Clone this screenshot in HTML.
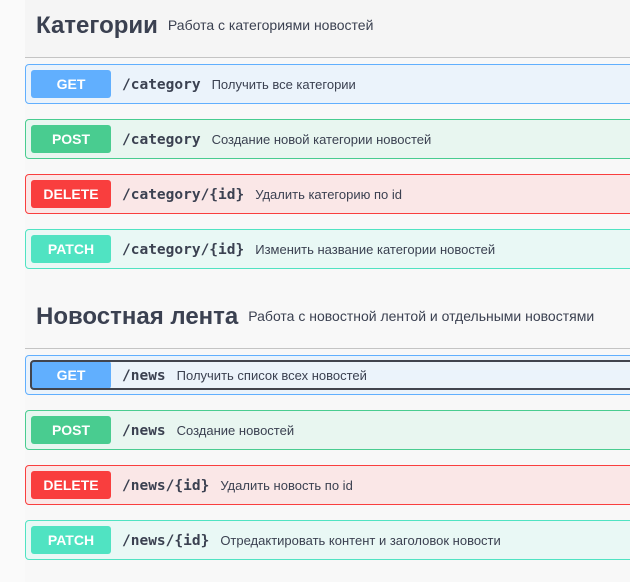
<!DOCTYPE html>
<html><head><meta charset="utf-8"><style>
*{margin:0;padding:0;box-sizing:border-box}
body{width:630px;height:582px;overflow:hidden;background:#fafafa;font-family:"Liberation Sans",sans-serif;color:#3b4151;position:relative}
.bg{position:absolute;left:25px;top:0;width:605px;height:582px;background:#f8f8f8}
.hdr{position:absolute;left:25px;width:605px;height:58px;background:#f5f5f5;border-bottom:1px solid #c4c4c4}
.hdr h2{position:absolute;left:11px;font-size:24px;font-weight:bold;color:#3b4151;white-space:nowrap}
.hdr span{font-size:14px;font-weight:normal;margin-left:10px;position:relative;top:-3px}
.op{position:absolute;left:25px;width:620px;height:40px;border:1px solid;border-radius:4px}
.m{position:absolute;left:5px;top:5px;width:80px;height:28px;border-radius:3px;color:#fff;font-weight:bold;font-size:14px;text-align:center;line-height:29px}
.p{position:absolute;left:96px;top:1px;line-height:38px;font-family:"DejaVu Sans Mono",monospace;font-weight:bold;font-size:14.5px;color:#3b4151;white-space:nowrap}
.d{font-family:"Liberation Sans",sans-serif;font-weight:normal;font-size:13px;margin-left:11px}
.get{background:#ebf3fb;border-color:#61affe}.get .m{background:#61affe}
.post{background:#e8f6f0;border-color:#49cc90}.post .m{background:#49cc90}
.del{background:#fae7e7;border-color:#f93e3e}.del .m{background:#f93e3e}
.pat{background:#e9f8f5;border-color:#50e3c2}.pat .m{background:#50e3c2}
.focus{position:absolute;left:4px;top:4px;width:620px;height:30px;border:2px solid #41444e;border-radius:4px;z-index:2}
</style></head><body>
<div class="bg"></div>
<div class="hdr" style="top:0"><h2 style="top:12px">Категории<span>Работа с категориями новостей</span></h2></div>
<div class="op get" style="top:64px"><div class="m">GET</div><div class="p">/category<span class="d">Получить все категории</span></div></div>
<div class="op post" style="top:119px"><div class="m">POST</div><div class="p">/category<span class="d">Создание новой категории новостей</span></div></div>
<div class="op del" style="top:174px"><div class="m">DELETE</div><div class="p">/category/{id}<span class="d">Удалить категорию по id</span></div></div>
<div class="op pat" style="top:229px"><div class="m">PATCH</div><div class="p">/category/{id}<span class="d">Изменить название категории новостей</span></div></div>
<div class="hdr" style="top:291px;background:#f8f8f8"><h2 style="top:12px">Новостная лента<span>Работа с новостной лентой и отдельными новостями</span></h2></div>
<div class="op get" style="top:355px"><div class="focus"></div><div class="m">GET</div><div class="p">/news<span class="d">Получить список всех новостей</span></div></div>
<div class="op post" style="top:410px"><div class="m">POST</div><div class="p">/news<span class="d">Создание новостей</span></div></div>
<div class="op del" style="top:465px"><div class="m">DELETE</div><div class="p">/news/{id}<span class="d">Удалить новость по id</span></div></div>
<div class="op pat" style="top:520px"><div class="m">PATCH</div><div class="p">/news/{id}<span class="d">Отредактировать контент и заголовок новости</span></div></div>
</body></html>
